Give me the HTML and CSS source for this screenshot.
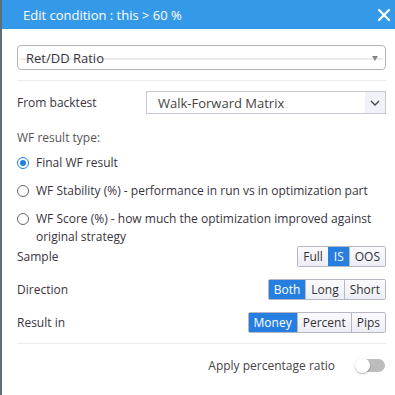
FILE: index.html
```html
<!DOCTYPE html>
<html>
<head>
<meta charset="utf-8">
<link rel="stylesheet" href="styles.css">
</head>
<body>
<div class="page">
  <div class="edge"></div>
  <div class="dialog">
    <div class="header">
      <span class="title">Edit condition : this &gt; 60 %</span>
      <svg class="close" width="12" height="12" viewBox="0 0 12 12"><path d="M1 1 L11 11 M11 1 L1 11" stroke="#fff" stroke-width="2.2" stroke-linecap="square"/></svg>
    </div>
    <div class="body">
      <div class="select-main">
        <span class="sel-line"></span>
        <span class="sel-text">Ret/DD Ratio</span>
        <span class="tri"></span>
      </div>
      <div class="sep"></div>
      <div class="row from">
        <span class="label">From backtest</span>
        <div class="select2">
          <span class="s2-text">Walk-Forward Matrix</span>
          <span class="s2-arrow"><svg width="10" height="6" viewBox="0 0 10 6"><path d="M1 1 L5 5 L9 1" fill="none" stroke="#444" stroke-width="1.3"/></svg></span>
        </div>
      </div>
      <div class="wf-title">WF result type:</div>
      <div class="radios">
        <div class="radio-row"><span class="radio checked"></span><span>Final WF result</span></div>
        <div class="radio-row"><span class="radio"></span><span>WF Stability (%) - performance in run vs in optimization part</span></div>
        <div class="radio-row"><span class="radio"></span><span>WF Score (%) - how much the optimization improved against original strategy</span></div>
      </div>
      <div class="opts">
        <div class="row opt">
          <span class="label">Sample</span>
          <div class="btns"><span class="b">Full</span><span class="b on">IS</span><span class="b">OOS</span></div>
        </div>
        <div class="row opt">
          <span class="label">Direction</span>
          <div class="btns"><span class="b on">Both</span><span class="b">Long</span><span class="b">Short</span></div>
        </div>
        <div class="row opt">
          <span class="label">Result in</span>
          <div class="btns"><span class="b on">Money</span><span class="b">Percent</span><span class="b">Pips</span></div>
        </div>
      </div>
      <div class="sep sep2"></div>
      <div class="apply">
        <span>Apply percentage ratio</span>
        <span class="toggle"><span class="knob"></span></span>
      </div>
    </div>
  </div>
</div>
</body>
</html>
```
FILE: styles.css
```css
html, body { margin: 0; padding: 0; }
body {
  width: 395px; height: 395px; overflow: hidden; background: #fff;
  font-family: "Open Sans", "Noto Sans", sans-serif; font-size: 12px; color: #3a3340;
}
.page { display: flex; height: 395px; }
.edge { width: 2px; background: #5d6e78; flex: none; }
.dialog { flex: 1; display: flex; flex-direction: column; background: #fff; }
.header {
  height: 29px; background: #3599e9; display: flex; align-items: center;
  justify-content: space-between; padding: 0 5px 0 21px;
}
.title { color: #fff; font-size: 13px; }
.body { padding: 16px 9px 0 15px; }
.select-main {
  position: relative; height: 23px; border: 1px solid #b4b4b4; border-radius: 4px;
  display: flex; align-items: center; padding: 0 0 0 8px;
}
.sel-line { position: absolute; left: 2px; right: 2px; top: 12px; height: 2px; background: #ebebeb; }
.sel-text { position: relative; font-size: 13px; color: #3a3340; }
.tri {
  position: absolute; right: 7px; top: 10px; width: 0; height: 0;
  border-left: 3.5px solid transparent; border-right: 3.5px solid transparent; border-top: 5px solid #888;
}
.sep { height: 1px; background: #ececec; margin-top: 10px; }
.row { display: flex; align-items: center; justify-content: space-between; }
.from { margin-top: 10px; }
.select2 {
  width: 238px; height: 21px; border: 1px solid #c8c8d0; display: flex; align-items: center;
}
.s2-text { flex: 1; padding-left: 11px; font-size: 13px; color: #444; }
.s2-arrow { width: 20px; height: 21px; background: #f1f1fa; display: flex; align-items: center; justify-content: center; }
.wf-title { margin-top: 15px; color: #555; }
.radios { margin-top: 8px; display: flex; flex-direction: column; gap: 10px; }
.radio-row { display: flex; align-items: flex-start; gap: 7px; line-height: 18px; }
.radio {
  width: 10px; height: 10px; border: 1.5px solid #666; border-radius: 50%; flex: none; margin-top: 2.5px;
  box-sizing: content-box;
}
.radio.checked { border-color: #1e7fe0; position: relative; }
.radio.checked::after {
  content: ""; position: absolute; left: 2px; top: 2px; width: 6px; height: 6px; border-radius: 50%; background: #1e7fe0;
}
.opts { display: flex; flex-direction: column; gap: 12px; margin-top: 0px; }
.btns { display: flex; border: 1px solid #b8b8c4; border-radius: 2px; height: 19px; }
.b {
  padding: 0 5px; display: flex; align-items: center; background: linear-gradient(#fafafe, #ededf6);
  border-left: 1px solid #b8b8c4; color: #333; font-size: 12px;
}
.b:first-child { border-left: none; }
.b.on { background: #267fe0; color: #fff; border-left-color: #267fe0; }
.b.on + .b { border-left-color: #b8b8c4; }
.sep2 { margin-top: 10px; }
.apply { display: flex; justify-content: flex-end; align-items: center; gap: 21px; margin-top: 13px; color: #444; font-size: 12px; }
.toggle { position: relative; width: 29px; height: 13px; border-radius: 7px; background: #bdbdbd; margin-right: 1px; }
.knob {
  position: absolute; left: -1px; top: -1px; width: 15px; height: 15px; border-radius: 50%; background: #fff;
  box-shadow: 0 1px 2px rgba(0,0,0,0.3);
}
```
